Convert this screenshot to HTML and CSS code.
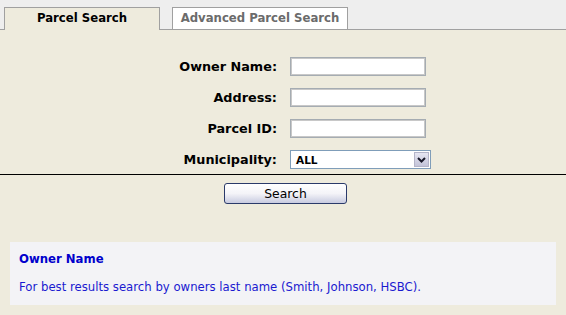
FILE: index.html
```html
<!DOCTYPE html>
<html lang="en">
<head>
    <meta charset="UTF-8">
    <title>Parcel Search</title>
    <link rel="stylesheet" href="styles.css">
</head>
<body>

    <div class="tabs">
        <div class="tab active">Parcel Search</div>
        <div class="tab">Advanced Parcel Search</div>
    </div>

    <form class="search-form">
        <div class="fields">
            <label for="owner">Owner Name:</label>
            <input type="text" id="owner">

            <label for="address">Address:</label>
            <input type="text" id="address">

            <label for="parcel">Parcel ID:</label>
            <input type="text" id="parcel">

            <label for="muni">Municipality:</label>
            <div class="select">
                <span>ALL</span>
                <span class="arrow">
                    <svg width="9" height="6" viewBox="0 0 9 6"><path d="M1 1 L4.5 4.5 L8 1" fill="none" stroke="#1a1a2a" stroke-width="2"/></svg>
                </span>
            </div>
        </div>

        <div class="divider"></div>

        <div class="actions">
            <button type="button">Search</button>
        </div>
    </form>

    <div class="help">
        <h3>Owner Name</h3>
        <p>For best results search by owners last name (Smith, Johnson, HSBC).</p>
    </div>

</body>
</html>
```

FILE: styles.css
```css
body {
    margin: 0;
    background: #eeebdd;
    font-family: "DejaVu Sans", Verdana, sans-serif;
}
.tabs {
    display: flex;
    gap: 12px;
    height: 22px;
    padding: 7px 0 0 4px;
    background: #eeeeee;
    border-bottom: 1px solid #a0a0a0;
}
.tab {
    box-sizing: border-box;
    width: 176px;
    height: 22px;
    border: 1px solid #a0a0a0;
    border-bottom: none;
    background: #ffffff;
    color: #6b6b6b;
    font-size: 11.7px;
    font-weight: bold;
    text-align: center;
    line-height: 21px;
}
.tab.active {
    width: 156px;
    height: 23px;
    margin-bottom: -1px;
    background: #eeebdd;
    color: #000;
}
.search-form {
    margin: 0;
}
.fields {
    display: grid;
    grid-template-columns: 277px 141px;
    column-gap: 13px;
    row-gap: 12px;
    align-items: center;
    padding-top: 27px;
}
.fields label {
    text-align: right;
    font-size: 12.8px;
    font-weight: bold;
    color: #000;
}
.fields input {
    box-sizing: border-box;
    width: 136px;
    height: 19px;
    margin: 0;
    border: 1px solid #a5acb2;
    outline: 1px solid #c8c8c8;
    outline-offset: -2px;
    background: #fff;
}
.select {
    box-sizing: border-box;
    display: flex;
    align-items: center;
    justify-content: space-between;
    width: 141px;
    height: 19px;
    border: 1px solid #7f9db9;
    background: #fff;
    font-size: 10.5px;
    font-weight: bold;
    color: #000;
    padding-left: 5px;
}
.arrow {
    display: flex;
    align-items: center;
    justify-content: center;
    width: 15px;
    height: 15px;
    margin-right: 1px;
    background: linear-gradient(#e6e6f2, #c3c3d8);
    border: 1px solid #b4b4c8;
    box-sizing: border-box;
}
.divider {
    margin-top: 5px;
    border-top: 1px solid #000;
}
.actions {
    padding-top: 8px;
    padding-left: 224px;
}
button {
    box-sizing: border-box;
    width: 123px;
    height: 21px;
    border: 1px solid #2a3a6a;
    border-radius: 3px;
    background: linear-gradient(#ffffff 0%, #f4f4f8 50%, #c8cbe0 100%);
    font-family: "DejaVu Sans", Verdana, sans-serif;
    font-size: 12.4px;
    color: #000;
    padding: 0;
}
.help {
    margin: 38px 10px 0 10px;
    padding: 10px 9px 11px 9px;
    background: #f3f3f6;
    color: #1a1ad0;
}
.help h3 {
    margin: 0;
    font-size: 11.7px;
    font-weight: bold;
    color: #0000cc;
}
.help p {
    margin: 14px 0 0 0;
    font-size: 11.7px;
}
```
